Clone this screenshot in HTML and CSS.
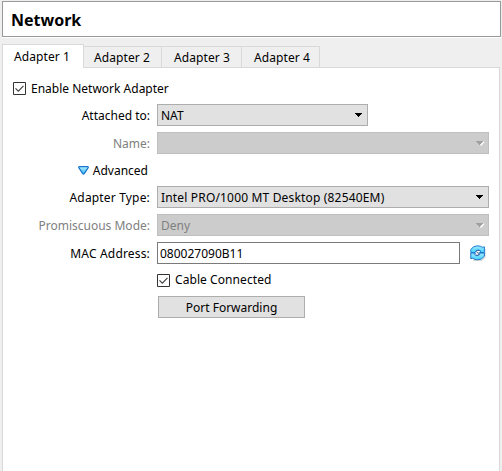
FILE: index.html
```html
<!DOCTYPE html>
<html lang="en">
<head>
<meta charset="utf-8">
<title>Network</title>
<link rel="stylesheet" href="styles.css">
</head>
<body>
<h1 class="header">Network</h1>
<nav class="tabs">
  <span class="tab active">Adapter 1</span>
  <span class="tab">Adapter 2</span>
  <span class="tab tab-wide">Adapter 3</span>
  <span class="tab tab-last">Adapter 4</span>
  <span class="rest"></span>
</nav>
<main class="pane">
  <label class="check"><svg class="box" viewBox="0 0 13 13"><path d="M.5.5h12v12H.5z" fill="#fff" stroke="#333"/><path d="M2.500 6.300l2.800 2.900 5.200-5.400" fill="none" stroke="#444" stroke-width="1.200"/></svg><span class="text">Enable Network Adapter</span></label>
  <div class="form">
    <span class="label">Attached to:</span>
    <div class="select short"><span class="text">NAT</span><svg class="arrow" viewBox="0 0 7 4"><path d="M0 0h7v1H6v1H5v1H4v1H3V3H2V2H1V1H0z"/></svg></div>
    <span class="label off">Name:</span>
    <div class="select disabled"><span></span><svg class="arrow" viewBox="0 0 7 4"><path d="M8 .8L4.500 4.500" stroke="#fff" stroke-width="1.300"/><path d="M0 0h7v1H6v1H5v1H4v1H3V3H2V2H1V1H0z" fill="#a0a0a0"/></svg></div>
    <span class="label advanced"><svg class="triangle" viewBox="0 0 11 9"><defs><linearGradient id="tri" x2="0" y2="1"><stop stop-color="#b5efff"/><stop offset="1" stop-color="#35b5f4"/></linearGradient></defs><path d="M1 .7h9q.5.300.2.900L6.300 7.600q-.8.900-1.600 0L.8 1.600Q.5 1 1 .7z" fill="url(#tri)" stroke="#1873cc" stroke-width="1.200"/></svg><span class="text">Advanced</span></span>
    <span></span>
    <span class="label wide">Adapter Type:</span>
    <div class="select"><span class="text wide">Intel PRO/1000 MT Desktop (82540EM)</span><svg class="arrow" viewBox="0 0 7 4"><path d="M0 0h7v1H6v1H5v1H4v1H3V3H2V2H1V1H0z"/></svg></div>
    <span class="label off">Promiscuous Mode:</span>
    <div class="select disabled"><span class="text">Deny</span><svg class="arrow" viewBox="0 0 7 4"><path d="M8 .8L4.500 4.500" stroke="#fff" stroke-width="1.300"/><path d="M0 0h7v1H6v1H5v1H4v1H3V3H2V2H1V1H0z" fill="#a0a0a0"/></svg></div>
    <span class="label wide">MAC Address:</span>
    <div class="mac"><div class="field"><span class="text">080027090B11</span></div>
      <svg class="refresh" viewBox="0 0 16 16"><defs><linearGradient id="ref" x2="0" y2="1"><stop stop-color="#a5e6ff"/><stop offset="1" stop-color="#42d4ff"/></linearGradient></defs><path d="M3 15.300h9l3-3V4" fill="none" stroke="#ccc"/><path d="M.8 7.500V4.500Q3 .8 7.500.8q3 0 5 1.500l1.900-.5v5.700H9.500L10.800 6Q8 3.800 6 5.700L5 7.500z" fill="url(#ref)" stroke="#1d7ed0"/><path d="M14.400 8v3.200Q12 14.800 7.500 14.800q-3 0-4.700-1.600l-2 .5V8h4.700L4.600 9.600q2.400 2.200 4.600.3L10 8z" fill="url(#ref)" stroke="#1d73c8"/><path d="M9.500 5.600Q6.500 4.800 6.500 6.700q.2 1 1.500 1.200 1.500.3 1 1.600-.7 1-3 .6" fill="none" stroke="#476b99"/></svg></div>
    <span></span>
    <label class="check"><svg class="box" viewBox="0 0 13 13"><path d="M.5.5h12v12H.5z" fill="#fff" stroke="#333"/><path d="M2.500 6.300l2.800 2.900 5.200-5.400" fill="none" stroke="#444" stroke-width="1.200"/></svg><span class="text cable">Cable Connected</span></label>
    <span></span>
    <div class="button">Port Forwarding</div>
  </div>
</main>
</body>
</html>
```
FILE: styles.css
```css
* { box-sizing: border-box; }
body {
  margin: 0;
  height: 471px;
  padding: 1px 1px 0 2px;
  overflow: hidden;
  display: flex;
  flex-direction: column;
  background: #efefef;
  color: #000;
  font: 12px/20px "Noto Sans", sans-serif;
  white-space: nowrap;
}
svg { display: block; flex: none; }
.header {
  margin: 0;
  height: 36px;
  flex: none;
  border: 1px solid #999;
  background: #fff;
  box-shadow: 0 1px #fff;
  padding: 1px 0 0 8px;
  font-size: 16px;
  line-height: 34px;
}
.tabs { display: flex; align-items: flex-end; height: 24px; margin: 7px 1px 0 0; flex: none; }
.tab {
  width: 78px;
  height: 22px;
  border: 1px solid #d9d9d9;
  border-left: 0;
  padding: 1px 0 0 10px;
  line-height: 20px;
  letter-spacing: 0.08px;
}
.tab-wide { width: 80px; padding-left: 12px; }
.tab-last { padding-left: 12px; }
.tab.active {
  width: 82px;
  height: 24px;
  background: #fff;
  border-left: 1px solid #d9d9d9;
  border-bottom: 0;
  padding: 2px 0 0 11px;
}
.rest { flex: 1; height: 1px; background: #d9d9d9; }
.pane {
  flex: 1;
  margin-right: 1px;
  border: solid #d9d9d9;
  border-width: 0 1px;
  background: #fff;
  padding: 10px 10px 0;
}
.check { display: flex; align-items: center; gap: 5px; height: 20px; }
.text { padding-top: 1px; }
.box { width: 13px; height: 13px; }
.form {
  display: grid;
  grid-template-columns: 137px 332px;
  grid-template-rows: 22px 22px 20px 22px 22px 22px 20px 22px;
  column-gap: 7px;
  row-gap: 6px;
  margin: 6px 0 0 0;
}
.label { justify-self: end; line-height: 22px; padding-top: 1px; }
.off { color: #808080; }
.wide { letter-spacing: 0.17px; }
.cable { padding-top: 0; letter-spacing: 0.07px; }
.advanced { display: flex; align-items: center; gap: 4px; line-height: 20px; margin-right: 2px; padding-top: 0; }
.triangle { width: 11px; height: 9px; }
.select {
  display: flex;
  align-items: center;
  justify-content: space-between;
  border: 1px solid #adadad;
  background: #e1e1e1;
  padding: 0 5px 0 3px;
}
.short { width: 211px; }
.disabled { background: #ccc; border-color: #bfbfbf; color: #808080; }
.arrow { width: 7px; height: 4px; overflow: visible; }
.mac { display: flex; align-items: center; gap: 10px; }
.field { display: flex; width: 303px; height: 22px; border: 1px solid #7a7a7a; padding-left: 2px; }
.refresh { width: 16px; height: 16px; }
.button {
  width: 147px;
  margin-left: 1px;
  border: 1px solid #adadad;
  background: #e1e1e1;
  text-align: center;
  line-height: 22px;
}
```
